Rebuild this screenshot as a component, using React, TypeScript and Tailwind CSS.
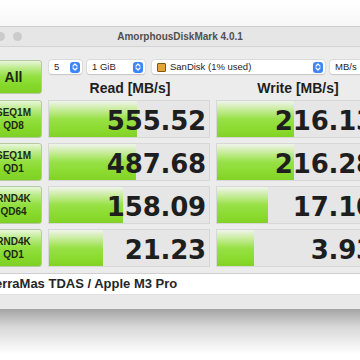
import React from 'react';

const rows = [
  { a: 'SEQ1M', b: 'QD8', read: '555.52', readW: 88, write: '216.13', writeW: 77 },
  { a: 'SEQ1M', b: 'QD1', read: '487.68', readW: 87, write: '216.28', writeW: 77 },
  { a: 'RND4K', b: 'QD64', read: '158.09', readW: 74, write: '17.10', writeW: 51 },
  { a: 'RND4K', b: 'QD1', read: '21.23', readW: 54, write: '3.93', writeW: 37 },
];

const green =
  'bg-[linear-gradient(to_bottom,#e9f7dd_0%,#bdeb8c_22%,#94e043_48%,#86d92b_75%,#7fd025_100%)]';

function Stepper() {
  return (
    <span className="flex h-[11px] w-[10px] items-center justify-center rounded-[3px] bg-[#3d84f7]">
      <svg width="6" height="8" viewBox="0 0 6 8" fill="none" stroke="white" strokeWidth="1.2" strokeLinecap="round" strokeLinejoin="round">
        <path d="M1 3 L3 1 L5 3" />
        <path d="M1 5 L3 7 L5 5" />
      </svg>
    </span>
  );
}

function Select({ children, className }: { children: React.ReactNode; className: string }) {
  return (
    <div className={`flex h-[14px] items-center justify-between rounded-[3px] bg-white pl-[5px] pr-[2px] text-[9.5px] text-[#262626] shadow-[0_0_0_0.5px_#cfcfcf,0_0.5px_1px_#bdbdbd] ${className}`}>
      <span className="flex items-center gap-[4px] whitespace-nowrap">{children}</span>
      <Stepper />
    </div>
  );
}

function Cell({ value, width }: { value: string; width: number }) {
  return (
    <div className="grid h-[38px] w-[162px] border border-[#d7d7d7] bg-[#e6e6e6]">
      {/* bar length comes from the data */}
      <div
        className="col-start-1 row-start-1 h-full bg-[linear-gradient(to_bottom,#f0f4ec_0%,#cbeda2_22%,#98e146_50%,#8bdb30_78%,#82d226_100%)]"
        style={{ width }}
      />
      <div className="col-start-1 row-start-1 flex items-center justify-end pr-[3px] pt-[3px] text-[26px] font-bold leading-none tracking-[-0.2px] text-[#1e1e1e] [font-family:'DejaVu_Sans',sans-serif]">
        {value}
      </div>
    </div>
  );
}

export default function App() {
  return (
    <div className="h-[360px] w-[360px] overflow-hidden bg-white [font-family:'Liberation_Sans',Arial,sans-serif]">
      <div className="h-[26px] bg-[linear-gradient(to_bottom,#ffffff,#f7f7f7)]" />
      <div className="ml-[-25px] w-[410px] border-t border-[#cfcfcf] bg-[#ececec]">
        <div className="flex h-[20px] items-center border-b border-[#d3d3d3] bg-[#e6e6e6]">
          <div className="flex w-[60px] items-center gap-[8px] pl-[4px]">
            <span className="h-[9px] w-[9px] rounded-full bg-[#cbcbcb]" />
            <span className="h-[9px] w-[9px] rounded-full bg-[#cbcbcb]" />
            <span className="h-[9px] w-[9px] rounded-full bg-[#cbcbcb]" />
          </div>
          <div className="flex-1 pr-[60px] text-center text-[10px] font-bold text-[#505050]">
            AmorphousDiskMark 4.0.1
          </div>
        </div>

        <div className="pl-[6px] pt-[13px]">
          <div className="flex gap-[7px]">
            <div className={`flex h-[34px] w-[61px] items-center justify-center rounded-[3px] border border-[#b5c9a2] ${green} pl-[4px] text-[14px] font-bold text-[#1d2a12]`}>
              All
            </div>
            <div className="flex flex-col">
              <div className="flex">
                <Select className="w-[33px]">5</Select>
                <Select className="ml-[5px] w-[58px]">1 GiB</Select>
                <Select className="ml-[7px] w-[173px]">
                  <span className="h-[9px] w-[9px] rounded-[1px] border border-[#7a5a10] bg-[#e3a53a]" />
                  SanDisk (1% used)
                </Select>
                <Select className="ml-[5px] w-[49px]">MB/s</Select>
              </div>
              <div className="mt-[4px] flex gap-[6px]">
                <div className="w-[162px] text-center text-[14px] font-bold text-[#1e1e1e]">Read [MB/s]</div>
                <div className="w-[162px] text-center text-[14px] font-bold text-[#1e1e1e]">Write [MB/s]</div>
              </div>
            </div>
          </div>

          <div className="mt-[1px] flex flex-col gap-[5px]">
            {rows.map((r, i) => (
              <div key={i} className="flex items-center">
                <div className={`flex h-[38px] w-[61px] flex-col items-center justify-center rounded-[3px] border border-[#b5c9a2] ${green} pl-[4px] text-[10px] font-bold leading-[13px] text-[#1d2a12]`}>
                  <span>{r.a}</span>
                  <span>{r.b}</span>
                </div>
                <div className="ml-[6px]">
                  <Cell value={r.read} width={r.readW} />
                </div>
                <div className="ml-[6px]">
                  <Cell value={r.write} width={r.writeW} />
                </div>
              </div>
            ))}
          </div>

          <div className="mt-[6px] flex h-[21px] w-[398px] items-center border-t border-[#cfcfcf] bg-white pl-[7px] text-[13px] font-semibold text-[#262626]">
            TerraMas TDAS / Apple M3 Pro
          </div>
        </div>
        <div className="h-[15px] border-t border-[#e0e0e0] bg-[#e9e9e9]" />
      </div>
      <div className="h-[45px] bg-[linear-gradient(to_bottom,#a4a4a4,#d8d8d8_40%,#ffffff)]" />
    </div>
  );
}
